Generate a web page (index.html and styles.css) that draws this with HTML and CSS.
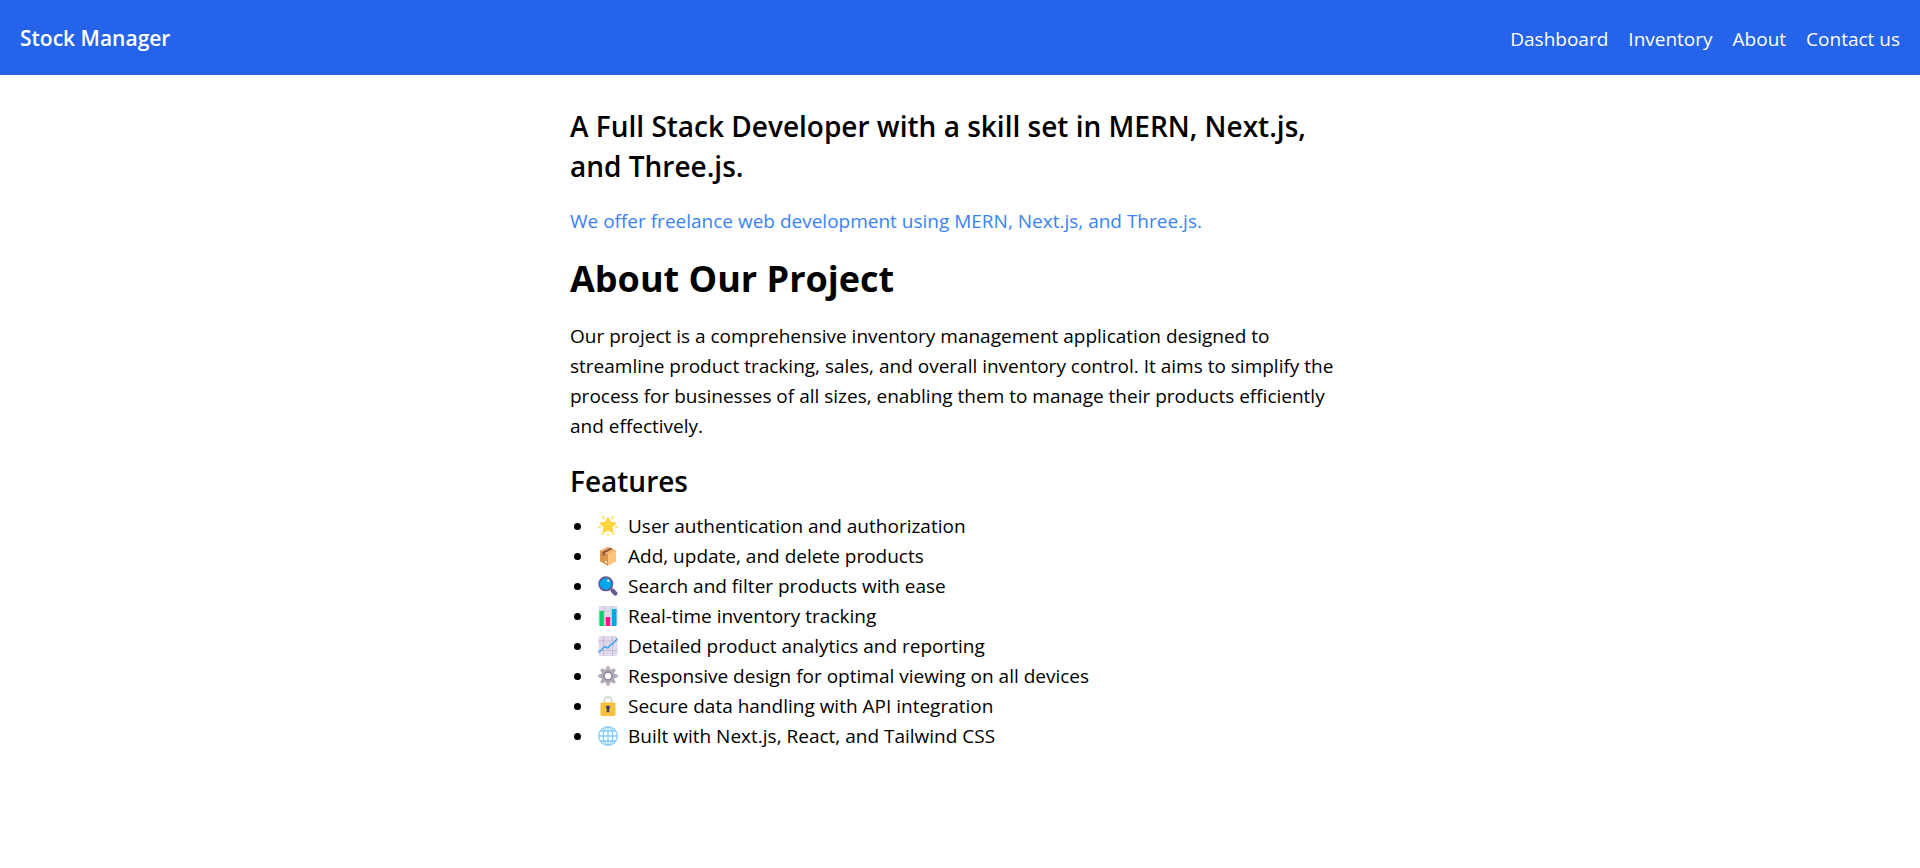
FILE: index.html
```html
<!DOCTYPE html>
<html lang="en">
<head>
<meta charset="utf-8">
<meta name="viewport" content="width=device-width, initial-scale=1">
<title>Stock Manager</title>
<link rel="stylesheet" href="styles.css">
</head>
<body>
<header class="navbar">
  <a class="brand" href="#">Stock Manager</a>
  <nav class="nav-links">
    <a href="#">Dashboard</a>
    <a href="#">Inventory</a>
    <a href="#">About</a>
    <a href="#">Contact us</a>
  </nav>
</header>
<main class="content">
  <h2 class="heading intro">A Full Stack Developer with a skill set in MERN, Next.js, and Three.js.</h2>
  <p class="offer"><a href="#">We offer freelance web development using MERN, Next.js, and Three.js.</a></p>
  <h1 class="title">About Our Project</h1>
  <p class="description">Our project is a comprehensive inventory management application designed to streamline product tracking, sales, and overall inventory control. It aims to simplify the process for businesses of all sizes, enabling them to manage their products efficiently and effectively.</p>
  <h2 class="heading">Features</h2>
  <ul class="features">
    <li><svg class="icon" viewBox="0 0 20 20" aria-hidden="true"><path d="M10 2.600l2.200 4 4.600.8-3.200 3.400.6 4.700L10 13.600l-4.200 1.900.6-4.700-3.200-3.400 4.600-.8z" fill="#ffd53e" stroke="#ffd53e" stroke-width="2.200" stroke-linejoin="round"/><path d="M5 .9l.6 1.500M15 .9l-.6 1.500M1 11.400l1.300-.4M19 11.400l-1.300-.4M4.200 18.200l.6-1M15.800 18.200l-.6-1M10 18.200v1" stroke="#ffde48" stroke-width="1.700" stroke-linecap="round"/></svg>User authentication and authorization</li>
    <li><svg class="icon" viewBox="0 0 20 20" aria-hidden="true"><path d="M10 .5l8 4v10.700l-8 4.500-8-4.500V4.500z" fill="#f1b56c"/><path d="M2 4.500l8 4v11.200l-8-4.500z" fill="#dc9550"/><path d="M10 8.500l8-4v10.700l-8 4.500z" fill="#ffc47c"/><path d="M4.500 5.800l8-4 2.200 1.100-8 4.100v3.100l-2.200-1.100z" fill="#8c5543"/><path d="M7 14.400l2 1v2l-2-1z" fill="#fff2df"/></svg>Add, update, and delete products</li>
    <li><svg class="icon" viewBox="0 0 20 20" aria-hidden="true"><path d="M12.500 12.500l2 2" stroke="#635994" stroke-width="2"/><path d="M14.800 14.800l2.500 2.700" stroke="#635994" stroke-width="4.200" stroke-linecap="round"/><circle cx="7.800" cy="7.800" r="6.700" fill="#00a6ed" stroke="#635994" stroke-width="1.700"/><circle cx="10.300" cy="4.800" r="1.200" fill="#dff5ff"/></svg>Search and filter products with ease</li>
    <li><svg class="icon" viewBox="0 0 20 20" aria-hidden="true"><rect x=".5" width="19" height="20" rx="2" fill="#e1d8ec"/><path d="M6.500 0v20M13.500 0v20M.5 5h19M.5 12h19" stroke="#cdc4d6" stroke-width="1"/><path d="M1.500 5h4.300v15H1.500z" fill="#00d26a"/><path d="M7.800 11h4.400v9H7.800z" fill="#ff0f91"/><path d="M14 3h4.500v17H14z" fill="#00a6ed"/></svg>Real-time inventory tracking</li>
    <li><svg class="icon" viewBox="0 0 20 20" aria-hidden="true"><rect x=".5" width="19" height="20" rx="2" fill="#e1d8ec"/><path d="M5.500 0v20M14.500 0v20M.5 5h19M.5 14.500h19" stroke="#c6bdcf" stroke-width="1"/><path d="M.7 16.500l6-6 3.200 1.500 3.200-4h1.500l4.700-5.300" fill="none" stroke="#3ba5ea" stroke-width="1.400" stroke-linejoin="round"/></svg>Detailed product analytics and reporting</li>
    <li><svg class="icon" viewBox="0 0 20 20" aria-hidden="true"><path d="M10 2v16M2 10h16M4.300 4.300l11.400 11.400M4.300 15.700L15.700 4.300" stroke="#b4abbd" stroke-width="3.800" stroke-linecap="round"/><circle cx="10" cy="10" r="7.200" fill="#b4abbd"/><circle cx="10" cy="10" r="4" fill="#fff" stroke="#998ea4" stroke-width="1.800"/></svg>Responsive design for optimal viewing on all devices</li>
    <li><svg class="icon" viewBox="0 0 20 20" aria-hidden="true"><path d="M6.300 8V4.800a3.700 3.700 0 0 1 7.400 0V8" fill="none" stroke="#d3d3d3" stroke-width="1.600"/><rect x="2.500" y="6.500" width="15" height="13.500" rx="1.600" fill="#f9c23c"/><path d="M10 9.500a2 2 0 0 1 1.100 3.700l.3 3H8.600l.3-3A2 2 0 0 1 10 9.500z" fill="#433b6b"/></svg>Secure data handling with API integration</li>
    <li><svg class="icon" viewBox="0 0 20 20" aria-hidden="true"><circle cx="10" cy="10" r="9.200" fill="#fff"/><g fill="none" stroke="#83cbff" stroke-width="1.300"><circle cx="10" cy="10" r="9.200"/><ellipse cx="10" cy="10" rx="4.800" ry="9.200"/><path d="M10 .8v18.400M.8 10h18.400M2.400 5h15.200M2.400 15h15.200"/></g></svg>Built with Next.js, React, and Tailwind CSS</li>
  </ul>
</main>
</body>
</html>
```
FILE: styles.css
```css
* {
  box-sizing: border-box;
}

body {
  margin: 0;
  background: #fff;
  color: #000;
  font-family: "Open Sans", "Noto Sans", sans-serif;
  font-size: 19px;
  line-height: 30px;
}

h1,
h2,
p,
ul {
  margin: 0;
  padding: 0;
}

a {
  color: inherit;
  text-decoration: none;
}

.navbar {
  display: flex;
  align-items: center;
  justify-content: space-between;
  padding: 21px 20px 19px;
  background: #2563eb;
  color: #fff;
}

.brand {
  font-size: 21px;
  font-weight: 600;
  line-height: 35px;
}

.nav-links {
  display: flex;
  gap: 20px;
}

.content {
  max-width: 820px;
  margin: 0 auto;
  padding: 31px 20px;
}

.heading {
  margin-bottom: 10px;
  font-size: 28px;
  font-weight: 600;
  line-height: 40px;
}

.intro {
  margin-bottom: 20px;
}

.offer {
  margin-bottom: 20px;
  color: #3b82f6;
}

.title {
  margin-bottom: 20px;
  font-size: 36px;
  font-weight: 700;
  line-height: 45px;
}

.description {
  margin-bottom: 20px;
}

.features {
  list-style: none;
}

.features li {
  display: flex;
  align-items: center;
}

.features li::before {
  content: "";
  width: 7px;
  height: 7px;
  margin: 0 17px 0 4px;
  border-radius: 50%;
  background: #000;
}

.icon {
  width: 20px;
  height: 20px;
  margin-right: 10px;
}
```
